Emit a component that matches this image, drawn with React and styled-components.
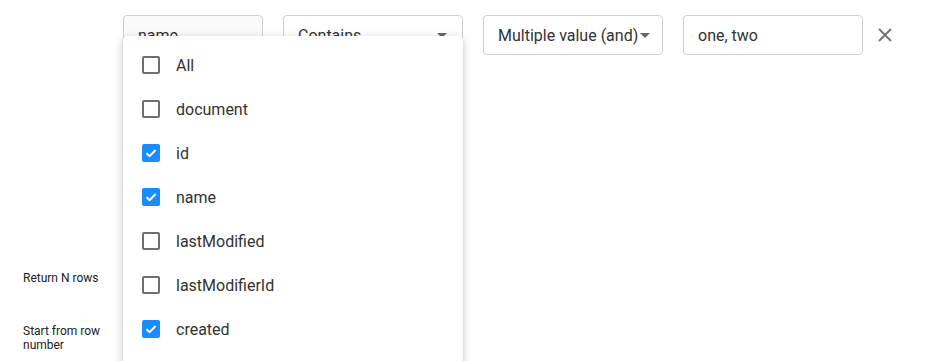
import React from "react";
import styled, { createGlobalStyle } from "styled-components";

const Global = createGlobalStyle`
  html, body { margin: 0; padding: 0; background: #fff; }
  body { font-family: Roboto, "Liberation Sans", sans-serif; color: #333; }
  * { box-sizing: border-box; }
`;

const Page = styled.div`
  position: relative;
  width: 943px;
  height: 361px;
  overflow: hidden;
`;

const FilterRow = styled.div`
  display: flex;
  align-items: center;
  gap: 20px;
  padding: 15px 0 0 123px;
`;

const Field = styled.div`
  display: flex;
  align-items: center;
  justify-content: space-between;
  width: ${(p) => p.$w}px;
  height: 40px;
  padding: 0 14px;
  border: 1px solid #d0d0d0;
  border-radius: 4px;
  background: ${(p) => (p.$muted ? "#fafafa" : "#fff")};
  font-size: 16px;
  color: #333;
  white-space: nowrap;
`;

const Caret = styled.span`
  width: 0;
  height: 0;
  border-left: 5px solid transparent;
  border-right: 5px solid transparent;
  border-top: 5px solid #666;
  margin-left: 2px;
  margin-right: ${(p) => p.$mr || 0}px;
`;

const CloseBtn = styled.button`
  display: flex;
  align-items: center;
  justify-content: center;
  width: 24px;
  height: 24px;
  margin-left: -10px;
  padding: 0;
  border: none;
  background: none;
`;

const Form = styled.div`
  display: grid;
  grid-template-rows: 40px 40px;
  row-gap: 20px;
  margin-top: 203px;
  padding-left: 23px;
`;

const Label = styled.div`
  display: flex;
  align-items: center;
  width: 82px;
  font-size: 12px;
  line-height: 14px;
  color: #222;
`;

const Menu = styled.div`
  position: absolute;
  left: 123px;
  top: 36px;
  width: 340px;
  height: 340px;
  padding-top: 7px;
  background: #fff;
  border-radius: 4px;
  box-shadow: 0 3px 10px rgba(0, 0, 0, 0.22), 0 1px 3px rgba(0, 0, 0, 0.08);
`;

const Item = styled.div`
  display: flex;
  align-items: center;
  height: 44px;
  padding-left: 19px;
  gap: 16px;
  font-size: 16px;
  color: #333;
`;

const Box = styled.span`
  display: flex;
  align-items: center;
  justify-content: center;
  width: 18px;
  height: 18px;
  border-radius: 2px;
  border: ${(p) => (p.$checked ? "none" : "2px solid #6f6f6f")};
  background: ${(p) => (p.$checked ? "#1a8cff" : "#fff")};
`;

const items = [
  ["All", false],
  ["document", false],
  ["id", true],
  ["name", true],
  ["lastModified", false],
  ["lastModifierId", false],
  ["created", true],
];

export default function App() {
  return (
    <Page>
      <Global />
      <FilterRow>
        <Field $w={140} $muted>name</Field>
        <Field $w={180}>
          Contains
          <Caret $mr={1} />
        </Field>
        <Field $w={180}>
          Multiple value (and)
          <Caret />
        </Field>
        <Field $w={180}>one, two</Field>
        <CloseBtn aria-label="remove">
          <svg width="14" height="14" viewBox="0 0 14 14">
            <path d="M1 1L13 13M13 1L1 13" stroke="#757575" strokeWidth="2" />
          </svg>
        </CloseBtn>
      </FilterRow>
      <Form>
        <Label>Return N rows</Label>
        <Label>Start from row number</Label>
      </Form>
      <Menu>
        {items.map(([label, checked]) => (
          <Item key={label}>
            <Box $checked={checked}>
              {checked && (
                <svg width="14" height="14" viewBox="0 0 14 14">
                  <path d="M2.5 7.2L5.6 10.2L11.6 4" stroke="#fff" strokeWidth="2" fill="none" />
                </svg>
              )}
            </Box>
            {label}
          </Item>
        ))}
      </Menu>
    </Page>
  );
}
